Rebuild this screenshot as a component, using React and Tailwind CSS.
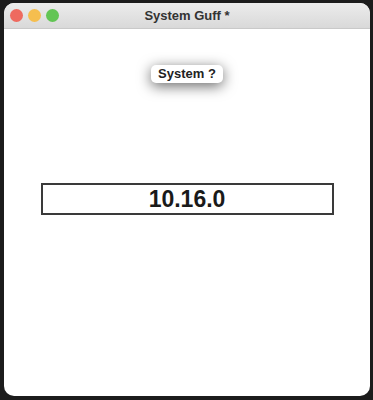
export default function App() {
  return (
    <div className="h-[400px] w-[373px] bg-[#1c1c1c] pt-[3px] pl-[4px] pr-[3px] pb-[4px] font-['Liberation_Sans',Arial,sans-serif]">
      <div className="flex h-full flex-col overflow-hidden rounded-[10px] bg-white">
        <div className="relative flex h-[26px] shrink-0 items-center justify-center border-b border-[#c9c9c9] bg-gradient-to-b from-[#ececec] to-[#d9d9d9]">
          <div className="absolute left-[6px] top-[6px] flex gap-[5px]">
            <span className="h-[13px] w-[13px] rounded-full bg-[#ee6a5f]" />
            <span className="h-[13px] w-[13px] rounded-full bg-[#f5be4f]" />
            <span className="h-[13px] w-[13px] rounded-full bg-[#62c554]" />
          </div>
          <span className="text-[13px] font-bold text-[#333]">System Guff *</span>
        </div>
        <div className="flex flex-1 flex-col items-center">
          <button className="mt-[36px] h-[18px] rounded-[5px] bg-white px-[7px] text-[13px] font-bold leading-[18px] text-[#222] shadow-[0_3px_14px_rgba(0,0,0,0.6)]">
            System ?
          </button>
          <div className="mt-[100px] flex h-[32px] w-[293px] items-center justify-center border-2 border-[#3a3a3a] text-[23px] font-bold text-[#1a1a1a]">
            10.16.0
          </div>
        </div>
      </div>
    </div>
  );
}
